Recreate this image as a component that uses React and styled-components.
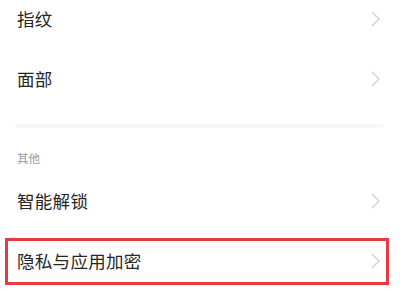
import React from "react";
import styled, { createGlobalStyle } from "styled-components";

const Global = createGlobalStyle`
  html, body { margin: 0; padding: 0; background: #ffffff; }
  body { font-family: "Noto Sans CJK SC", "Noto Sans", sans-serif; }
`;

const Page = styled.div`
  width: 400px;
  height: 300px;
  overflow: hidden;
  background: #fff;
`;

const List = styled.div`
  display: flex;
  flex-direction: column;
  margin-top: -11px;
`;

const Row = styled.div`
  position: relative;
  height: 60px;
  display: flex;
  align-items: center;
  justify-content: space-between;
  padding: 0 20px 0 17px;
  ${(p) =>
    p.$highlight &&
    `
    &::after {
      content: "";
      position: absolute;
      top: 7px;
      bottom: 6px;
      left: 5px;
      right: 11px;
      border: 3px solid #e63b41;
    }
  `}
`;

const Label = styled.span`
  font-size: 17.5px;
  color: #262626;
  line-height: 1;
  letter-spacing: 0.3px;
`;

const Divider = styled.div`
  margin: 15px 17px 0 15px;
  height: 4px;
  background: #f7f7f7;
`;

const Header = styled.div`
  height: 43px;
  display: flex;
  align-items: flex-end;
  padding: 0 0 7px 17px;
  box-sizing: border-box;
  font-size: 11.5px;
  color: #9a9a9a;
  line-height: 1;
`;

const Chevron = () => (
  <svg width="9" height="16" viewBox="0 0 9 16">
    <polyline points="1,1 8,8 1,15" fill="none" stroke="#d0d0d0" strokeWidth="1.3" />
  </svg>
);

const Item = ({ label, highlight }) => (
  <Row $highlight={highlight}>
    <Label>{label}</Label>
    <Chevron />
  </Row>
);

export default function App() {
  return (
    <Page>
      <Global />
      <List>
        <Item label="指纹" />
        <Item label="面部" />
        <Divider />
        <Header>其他</Header>
        <Item label="智能解锁" />
        <Item label="隐私与应用加密" highlight />
      </List>
    </Page>
  );
}
